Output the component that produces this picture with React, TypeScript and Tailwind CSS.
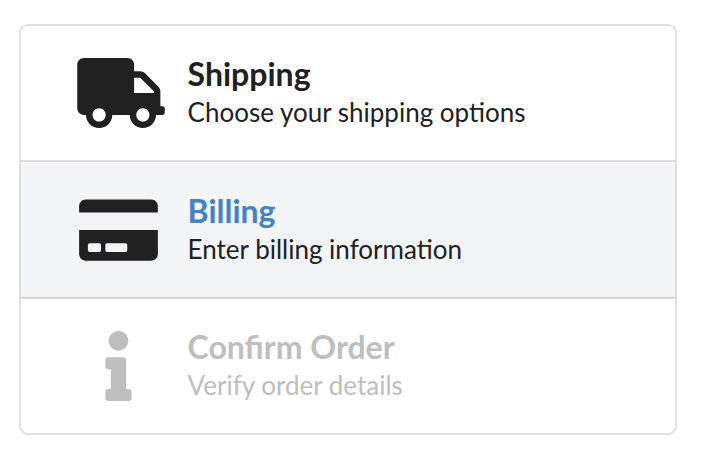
import { FaTruck, FaCreditCard, FaInfo } from "react-icons/fa";
import type { IconType } from "react-icons";

type StepProps = {
  icon: IconType;
  iconClass: string;
  title: string;
  description: string;
  className: string;
  titleClass: string;
};

function Step({ icon: Icon, iconClass, title, description, className, titleClass }: StepProps) {
  return (
    <li className={`flex items-center ${className}`}>
      <div className="ml-[56px] flex w-[88px] shrink-0 justify-center">
        <Icon className={iconClass} />
      </div>
      <div className="ml-[22.6px]">
        <h2 className={`text-[32px] leading-[36px] font-bold ${titleClass}`}>{title}</h2>
        <p className="mt-[2px] text-[26px] leading-[36px]">{description}</p>
      </div>
    </li>
  );
}

export default function App() {
  return (
    <main className="h-[460px] bg-white px-[19px] pt-[24px] font-['Lato',sans-serif]">
      <ol className="h-[411px] w-[658px] overflow-hidden rounded-[9px] border-2 border-[#dedede]">
        <Step
          icon={FaTruck}
          iconClass="h-[70px] w-[88px]"
          title="Shipping"
          description="Choose your shipping options"
          className="h-[136px] border-b-2 border-[#dedede] text-[#212121]"
          titleClass=""
        />
        <Step
          icon={FaCreditCard}
          iconClass="mr-[5px] h-[70px] w-[79px]"
          title="Billing"
          description="Enter billing information"
          className="h-[137px] border-b-2 border-[#d4d4d5] bg-[#f3f4f6] text-[#212121]"
          titleClass="text-[#4183c4]"
        />
        <Step
          icon={FaInfo}
          iconClass="mr-[5px] h-[70px] w-[27px]"
          title="Confirm Order"
          description="Verify order details"
          className="h-[134px] text-[#bebebe]"
          titleClass=""
        />
      </ol>
    </main>
  );
}
